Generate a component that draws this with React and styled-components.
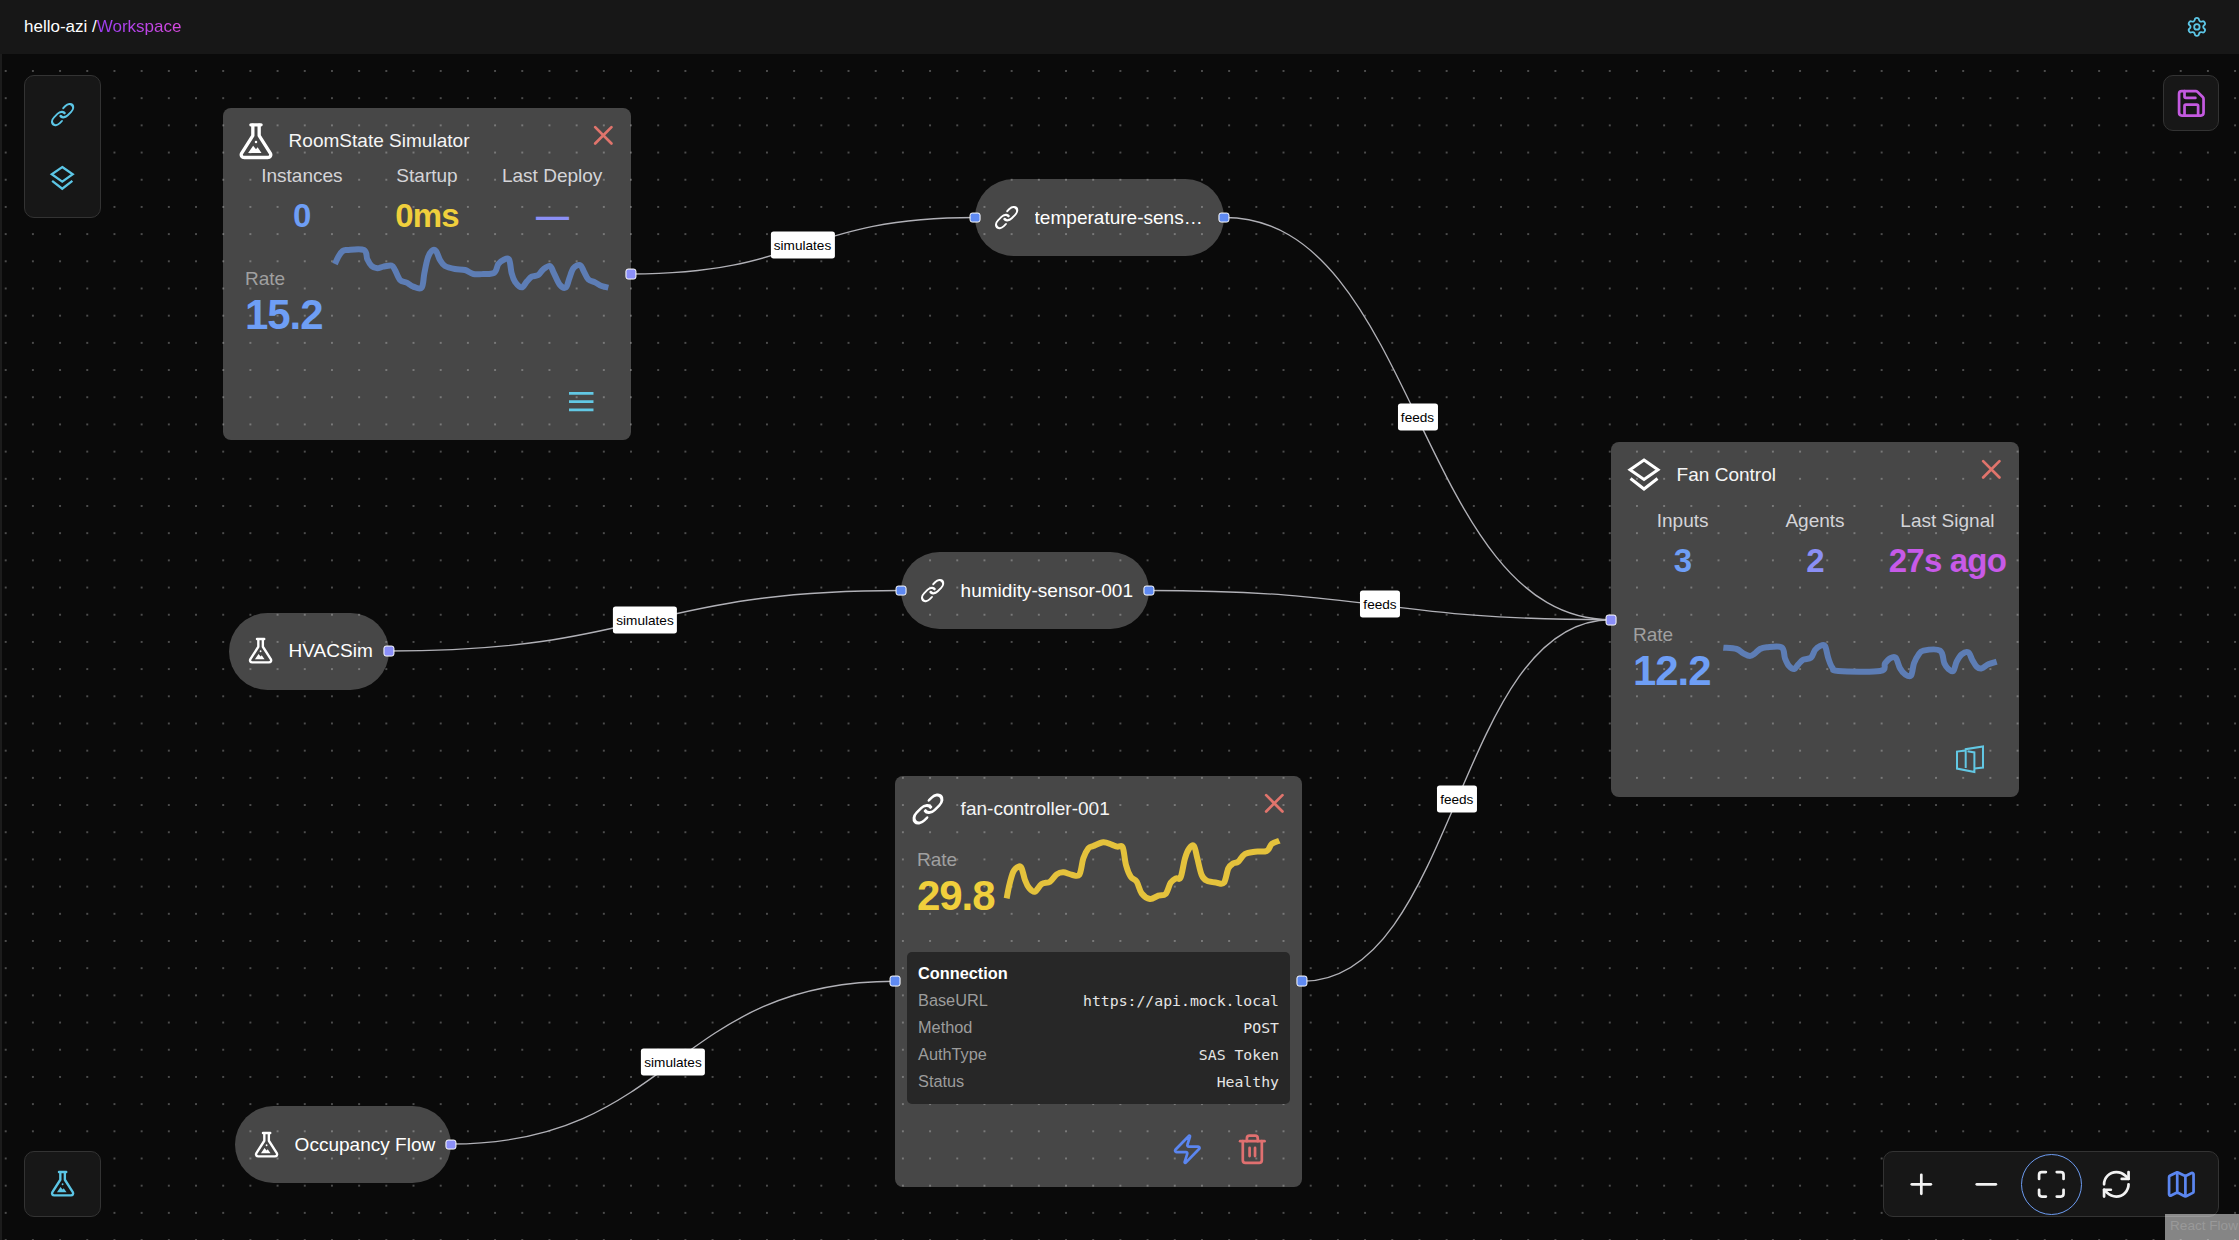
import React from 'react';
import styled, { createGlobalStyle } from 'styled-components';
import { X, Zap, Trash2, Settings, Save, Plus, Minus, Maximize, RefreshCw, Map as MapIcon } from 'lucide-react';

const Global = createGlobalStyle`
  html, body { margin: 0; padding: 0; height: 100%; background: #0a0a0a; overflow: hidden; }
  * { box-sizing: border-box; }
  body { font-family: "Liberation Sans", Arial, sans-serif; color: #fff; }
`;

const Page = styled.div`
  width: 2239px; height: 1240px; display: flex; flex-direction: column; background: #0a0a0a;
`;
const TopBar = styled.header`
  flex: 0 0 54px; display: flex; align-items: center; justify-content: space-between;
  padding: 0 31px 1px 24px; background: #171717; font-size: 17px; color: #fff;
`;
const Crumb = styled.div`display: flex; white-space: pre;`;
const CrumbAccent = styled.span`
  background: linear-gradient(90deg, #9a3df2, #d94ae0);
  -webkit-background-clip: text; background-clip: text; color: transparent;
`;
const GearWrap = styled.span`display: flex; color: #5cc6e6;`;
const Body = styled.div`flex: 1; display: flex; min-height: 0;`;
const Rail = styled.div`flex: 0 0 2px; background: #1c1c1c;`;
const Canvas = styled.main`
  position: relative; flex: 1; overflow: hidden; background-color: #0a0a0a;
  background-image: radial-gradient(circle, #6e6e6e 0.55px, transparent 0.95px);
  background-size: 27.2px 27.2px;
  background-position: -9.9px 3.4px;
`;
const EdgeLayer = styled.svg`position: absolute; inset: 0; width: 100%; height: 100%;`;
const EdgePath = styled.path`fill: none; stroke: #b1b1b7; stroke-width: 1.36px;`;
const EdgeLabel = styled.div`
  position: absolute; left: ${p => p.$x - 2}px; top: ${p => p.$y - 54}px;
  transform: translate(-50%, -50%);
  background: #fff; color: #000; font-size: 13.6px; line-height: 27px; height: 27px;
  padding: 0 3.4px; border-radius: 2.7px; white-space: nowrap;
`;

const NodeBase = styled.div`
  position: absolute; left: ${p => p.$x - 2}px; top: ${p => p.$y - 54}px;
  width: ${p => p.$w}px; height: ${p => p.$h}px;
  background: rgba(255,255,255,0.25);
`;
const Card = styled(NodeBase)`
  border-radius: 8px; display: flex; flex-direction: column;
`;
const Pill = styled(NodeBase)`
  border-radius: 38.5px; display: flex; align-items: center; gap: 14px;
  padding: 0 ${p => p.$pr ?? 16}px 0 18.4px;
  color: #fff; font-size: 19.04px;
`;
const PillText = styled.span`
  flex: 1; min-width: 0; white-space: nowrap; overflow: hidden; text-overflow: ellipsis;
`;
const Handle = styled.span`
  position: absolute; top: 50%; ${p => p.$side}: 0;
  width: 10.9px; height: 10.9px; border-radius: 2.7px; border: 1px solid #fff;
  background: ${p => p.$c};
  transform: translate(${p => (p.$side === 'left' ? '-50%' : '50%')}, -50%);
`;
const CardHandle = styled(Handle)`top: ${p => p.$top}px;`;

const CardHead = styled.div`
  display: flex; align-items: center; gap: 14px; padding: 13.6px 13.6px 0; height: 51.6px; flex: none;
`;
const CardTitle = styled.span`font-size: 19.04px; color: #f5f5f5;`;
const Close = styled.span`
  position: absolute; top: 11px; right: 11px; display: flex; color: #e0746c;
`;
const Stats = styled.div`
  display: grid; grid-template-columns: repeat(3, 1fr);
  margin-top: ${p => p.$top}px; padding: 0 ${p => p.$pad}px; flex: none;
`;
const Stat = styled.div`display: flex; flex-direction: column; align-items: center;`;
const StatLabel = styled.span`font-size: 19.04px; line-height: 26px; margin-bottom: 7px; color: #d4d4d8; white-space: nowrap;`;
const StatValue = styled.span`
  font-size: 33px; line-height: 40px; font-weight: 700; letter-spacing: -0.025em; white-space: nowrap;
  color: ${p => p.$c};
`;
const RateRow = styled.div`
  display: flex; align-items: flex-start; padding-left: 22px; margin-top: ${p => p.$top}px; flex: none;
`;
const RateBlock = styled.div`
  flex: 0 0 82px; display: flex; flex-direction: column; margin-top: ${p => p.$top}px;
`;
const RateLabel = styled.span`font-size: 19.04px; line-height: 26px; color: #a0a0a0;`;
const RateValue = styled.span`
  font-size: 42px; line-height: 46px; font-weight: 700; letter-spacing: -0.025em; color: ${p => p.$c}; white-space: nowrap;
`;
const Spark = styled.svg`
  flex: none; display: block; margin-top: ${p => p.$top}px; margin-left: ${p => p.$left}px;
`;
const ConnBox = styled.section`
  margin: 33.3px 12px 0; padding: 8px 11px 9px; height: 152px; background: #272727; border-radius: 5px; flex: none;
`;
const ConnTitle = styled.div`font-size: 16.32px; line-height: 27px; font-weight: 700; color: #fff;`;
const ConnRow = styled.div`display: flex; justify-content: space-between; align-items: center; height: 27px;`;
const ConnKey = styled.span`font-size: 16.32px; color: #9c9c9c;`;
const ConnVal = styled.span`font-family: "DejaVu Sans Mono", monospace; font-size: 14.8px; color: #e5e5e5;`;
const CardFoot = styled.div`
  margin-top: auto; display: flex; justify-content: flex-end; gap: 33px; padding: 0 33px 21.7px 0;
`;
const FootIcon = styled.span`display: flex; color: ${p => p.$c};`;

const ToolPanel = styled.aside`
  position: absolute; background: #171717; border: 1px solid #333; border-radius: 10px;
  display: flex; align-items: center; justify-content: center;
`;
const LeftTools = styled(ToolPanel)`
  left: 22px; top: 21px; width: 77px; height: 143px; flex-direction: column; gap: 36px; color: #5cc6e6;
`;
const BottomTools = styled(ToolPanel)`
  left: 22px; bottom: 23px; width: 77px; height: 66px; color: #5cc6e6;
`;
const SaveTool = styled(ToolPanel)`
  right: 20px; top: 21px; width: 56px; height: 56px; color: #c45ae0;
`;
const Controls = styled(ToolPanel)`
  right: 20px; bottom: 23px; width: 336px; height: 66px; gap: 4px; color: #f2f2f2;
`;
const CtlButton = styled.span`
  width: 61px; height: 61px; border-radius: 50%; display: flex; align-items: center; justify-content: center;
  border: 1.4px solid ${p => (p.$on ? '#6c9bf0' : 'transparent')}; color: ${p => p.$c || 'inherit'};
`;
const Attribution = styled.div`
  position: absolute; right: 0; bottom: 0; width: 74px; height: 26px; padding: 3px 0 0 5px; overflow: hidden;
  background: rgba(255,255,255,0.5); color: #999; font-size: 13.6px; line-height: 18px; white-space: nowrap;
`;

const Flask = ({ size }) => (
  <svg width={size} height={size} viewBox="0 0 24 24" fill="none" stroke="currentColor" strokeWidth="2.1" strokeLinecap="round" strokeLinejoin="round">
    <path d="M8.8 1.8h6.4" />
    <path d="M10 2v6.6L3 19.6c-.9 1.6.2 2.8 1.6 2.8h14.8c1.4 0 2.5-1.2 1.6-2.8L14 8.6V2" />
    <path d="M7 19.6l3.2-4.6 1.8 2.2 1-1.2 2.5 3.6z" fill="currentColor" stroke="none" />
    <circle cx="12" cy="12.6" r=".8" fill="currentColor" stroke="none" />
  </svg>
);
const Chain = ({ size, box }) => (
  <svg width={size} height={size} viewBox={`${12 - box / 2} ${12 - box / 2} ${box} ${box}`} fill="none" stroke="currentColor" strokeWidth="2.3" strokeLinecap="round" strokeLinejoin="round">
    <g transform="translate(12 12) rotate(-45) scale(1.13 0.82) rotate(45) translate(-12 -12)">
      <path d="M10 13a5 5 0 0 0 7.54.54l3-3a5 5 0 0 0-7.07-7.07l-1.72 1.71" />
      <path d="M14 11a5 5 0 0 0-7.54-.54l-3 3a5 5 0 0 0 7.07 7.07l1.71-1.71" />
    </g>
  </svg>
);
const Stack = ({ size }) => (
  <svg width={size} height={size} viewBox="-3 -2 38 38" fill="none" stroke="currentColor" strokeWidth="3" strokeLinejoin="miter">
    <path d="M16 2 L30 11.7 L16 21.4 L2 11.7 Z" />
    <path d="M2.5 20.5 L16 31 L29.5 20.5" />
  </svg>
);
const ListLines = () => (
  <svg width="32.64" height="32.64" viewBox="0 0 32.64 32.64" fill="none" stroke="#62c8e4" strokeWidth="2.7">
    <path d="M4 7.4h24.5M4 15.6h24.5M4 23.8h24.5" />
  </svg>
);
const Panels = () => (
  <svg width="32.64" height="32.64" viewBox="0 0 32.64 32.64" fill="none" stroke="#62c8e4" strokeWidth="2">
    <path d="M12.7 25 V6.2 L30 3.4 V24.6 L21.4 25.6" />
    <path d="M12.7 7.4 L4 8.6 V25.6 L21.4 29 V9.4 L14.5 8.2" />
  </svg>
);

const smooth = pts => {
  let d = `M${pts[0][0]} ${pts[0][1]}`;
  for (let i = 0; i < pts.length - 1; i++) {
    const p0 = pts[Math.max(i - 1, 0)], p1 = pts[i], p2 = pts[i + 1], p3 = pts[Math.min(i + 2, pts.length - 1)];
    const c1 = [p1[0] + (p2[0] - p0[0]) / 6, p1[1] + (p2[1] - p0[1]) / 6];
    const c2 = [p2[0] - (p3[0] - p1[0]) / 6, p2[1] - (p3[1] - p1[1]) / 6];
    d += `C${c1[0].toFixed(1)} ${c1[1].toFixed(1)} ${c2[0].toFixed(1)} ${c2[1].toFixed(1)} ${p2[0]} ${p2[1]}`;
  }
  return d;
};
const Sparkline = ({ pts, color, h, top = 0, left = 0 }) => (
  <Spark width="290" height={h} viewBox={`0 0 870 ${h * 3}`} $top={top} $left={left} fill="none">
    <path d={smooth(pts)} stroke={color} strokeWidth="18" strokeLinejoin="round" />
  </Spark>
);

const roomPts = [[15,72],[25,50],[38,33],[52,30],[102,30],[112,58],[125,78],[142,85],[160,80],[185,77],[195,90],[210,120],[230,128],[250,140],[275,143],[283,100],[293,55],[305,33],[318,33],[330,60],[345,78],[375,87],[405,90],[430,102],[460,102],[493,98],[505,72],[520,60],[537,58],[545,100],[555,125],[575,142],[590,125],[605,110],[625,105],[640,88],[660,78],[672,100],[690,135],[708,142],[718,115],[730,85],[750,75],[762,95],[775,118],[795,127],[815,138],[835,143]];
const fanCtlPts = [[25,38],[65,42],[85,55],[105,63],[120,55],[135,42],[155,37],[200,37],[210,70],[222,93],[238,102],[250,88],[265,74],[288,68],[300,45],[315,33],[330,33],[340,70],[352,98],[370,108],[495,108],[510,85],[525,70],[542,68],[555,100],[570,118],[588,122],[597,85],[610,60],[625,47],[675,47],[688,85],[700,102],[715,108],[725,80],[740,58],[760,52],[772,75],[785,95],[800,100],[820,88],[845,80]];
const yellowPts = [[20,205],[28,165],[40,125],[55,110],[65,115],[75,150],[88,175],[105,185],[125,162],[150,155],[170,133],[190,127],[215,134],[238,134],[250,85],[265,55],[280,48],[310,37],[335,44],[352,50],[368,52],[378,105],[392,140],[410,155],[425,190],[450,207],[475,197],[497,192],[512,158],[528,145],[542,142],[555,85],[568,55],[582,48],[592,85],[605,135],[620,152],[650,158],[672,158],[685,115],[700,100],[715,95],[735,72],[765,65],[800,63],[815,42],[838,32]];

const edges = [
  [631, 274, 975, 217.5], [1224.5, 217.5, 1611, 619.7], [389.5, 651, 901, 590.5],
  [1149, 590.5, 1611, 619.7], [451, 1144, 895, 981.3], [1302.3, 981.3, 1611, 619.7],
];
const edgeD = ([a, b, c, d]) => `M${a} ${b}C${(a + c) / 2} ${b} ${(a + c) / 2} ${d} ${c} ${d}`;
const labels = [
  ['simulates', 802.5, 245], ['simulates', 645, 620], ['simulates', 673, 1062],
  ['feeds', 1417.5, 417], ['feeds', 1380, 604], ['feeds', 1456.8, 799.2],
];
const BLUE = '#5f8af2', INDIGO = '#8b8ff8';
const V_BLUE = '#6e9ef5', V_YEL = '#f0cf3c', V_IND = '#8b8ff5', V_PUR = '#c75ae8';
const SPARK_BLUE = '#5d7db5';
const conn = [['BaseURL', 'https://api.mock.local'], ['Method', 'POST'], ['AuthType', 'SAS Token'], ['Status', 'Healthy']];

export default function App() {
  return (
    <Page>
      <Global />
      <TopBar>
        <Crumb>hello-azi /<CrumbAccent>Workspace</CrumbAccent></Crumb>
        <GearWrap><Settings size={21.76} strokeWidth={2} /></GearWrap>
      </TopBar>
      <Body>
        <Rail />
        <Canvas>
          <EdgeLayer viewBox="2 54 2237 1186">
            {edges.map((e, i) => <EdgePath key={i} d={edgeD(e)} />)}
          </EdgeLayer>
          {labels.map(([t, x, y], i) => <EdgeLabel key={i} $x={x} $y={y}>{t}</EdgeLabel>)}

          <Card $x={223} $y={108} $w={408} $h={332}>
            <CardHead><Flask size={38} /><CardTitle>RoomState Simulator</CardTitle></CardHead>
            <Close><X size={32.64} strokeWidth={2} /></Close>
            <Stats $top={3} $pad={16.3}>
              <Stat><StatLabel>Instances</StatLabel><StatValue $c={V_BLUE}>0</StatValue></Stat>
              <Stat><StatLabel>Startup</StatLabel><StatValue $c={V_YEL}>0ms</StatValue></Stat>
              <Stat><StatLabel>Last Deploy</StatLabel><StatValue $c={V_IND}>—</StatValue></Stat>
            </Stats>
            <RateRow $top={4.3}>
              <RateBlock $top={26}><RateLabel>Rate</RateLabel><RateValue $c={V_BLUE}>15.2</RateValue></RateBlock>
              <Sparkline pts={roomPts} color={SPARK_BLUE} h={60} left={3} />
            </RateRow>
            <CardFoot><ListLines /></CardFoot>
            <CardHandle $side="right" $c={INDIGO} $top={166} />
          </Card>

          <Card $x={1611} $y={442} $w={408} $h={355}>
            <CardHead><Stack size={38} /><CardTitle>Fan Control</CardTitle></CardHead>
            <Close><X size={32.64} strokeWidth={2} /></Close>
            <Stats $top={14.4} $pad={5.4}>
              <Stat><StatLabel>Inputs</StatLabel><StatValue $c={V_BLUE}>3</StatValue></Stat>
              <Stat><StatLabel>Agents</StatLabel><StatValue $c={V_IND}>2</StatValue></Stat>
              <Stat><StatLabel>Last Signal</StatLabel><StatValue $c={V_PUR}>27s ago</StatValue></Stat>
            </Stats>
            <RateRow $top={41}>
              <RateBlock $top={0}><RateLabel>Rate</RateLabel><RateValue $c={V_BLUE}>12.2</RateValue></RateBlock>
              <Sparkline pts={fanCtlPts} color={SPARK_BLUE} h={60} top={13} />
            </RateRow>
            <CardFoot><Panels /></CardFoot>
            <CardHandle $side="left" $c={INDIGO} $top={177.7} />
          </Card>

          <Card $x={895} $y={776} $w={407} $h={411}>
            <CardHead><Chain size={38} box={28.6} /><CardTitle>fan-controller-001</CardTitle></CardHead>
            <Close><X size={32.64} strokeWidth={2} /></Close>
            <RateRow $top={2.4}>
              <RateBlock $top={17}><RateLabel>Rate</RateLabel><RateValue $c={V_YEL}>29.8</RateValue></RateBlock>
              <Sparkline pts={yellowPts} color="#e4c23c" h={80} left={1} />
            </RateRow>
            <ConnBox>
              <ConnTitle>Connection</ConnTitle>
              {conn.map(([k, v]) => <ConnRow key={k}><ConnKey>{k}</ConnKey><ConnVal>{v}</ConnVal></ConnRow>)}
            </ConnBox>
            <CardFoot>
              <FootIcon $c="#5b86f0"><Zap size={32.64} strokeWidth={2} /></FootIcon>
              <FootIcon $c="#e07070"><Trash2 size={32.64} strokeWidth={2} /></FootIcon>
            </CardFoot>
            <CardHandle $side="left" $c={BLUE} $top={205.3} />
            <CardHandle $side="right" $c={BLUE} $top={205.3} />
          </Card>

          <Pill $x={975} $y={179} $w={249} $h={77}>
            <Chain size={27.2} box={27.2} /><PillText>temperature-sensor-001</PillText>
            <Handle $side="left" $c={BLUE} /><Handle $side="right" $c={BLUE} />
          </Pill>
          <Pill $x={901} $y={552} $w={248} $h={77}>
            <Chain size={27.2} box={27.2} /><PillText>humidity-sensor-001</PillText>
            <Handle $side="left" $c={BLUE} /><Handle $side="right" $c={BLUE} />
          </Pill>
          <Pill $x={229} $y={612.5} $w={160} $h={77}>
            <Flask size={27.2} /><PillText>HVACSim</PillText>
            <Handle $side="right" $c={INDIGO} />
          </Pill>
          <Pill $x={235} $y={1106} $w={216} $h={77} $pr={6}>
            <Flask size={27.2} /><PillText>Occupancy Flow</PillText>
            <Handle $side="right" $c={INDIGO} />
          </Pill>

          <LeftTools>
            <Chain size={27.2} box={27.2} />
            <Stack size={28.5} />
          </LeftTools>
          <BottomTools><Flask size={27.2} /></BottomTools>
          <SaveTool><Save size={32.64} strokeWidth={2} /></SaveTool>
          <Controls>
            <CtlButton><Plus size={32.64} strokeWidth={2} /></CtlButton>
            <CtlButton><Minus size={32.64} strokeWidth={2} /></CtlButton>
            <CtlButton $on><Maximize size={32.64} strokeWidth={2} /></CtlButton>
            <CtlButton><RefreshCw size={32.64} strokeWidth={2} /></CtlButton>
            <CtlButton $c="#5b86f0"><MapIcon size={32.64} strokeWidth={2} /></CtlButton>
          </Controls>
          <Attribution>React Flow</Attribution>
        </Canvas>
      </Body>
    </Page>
  );
}
